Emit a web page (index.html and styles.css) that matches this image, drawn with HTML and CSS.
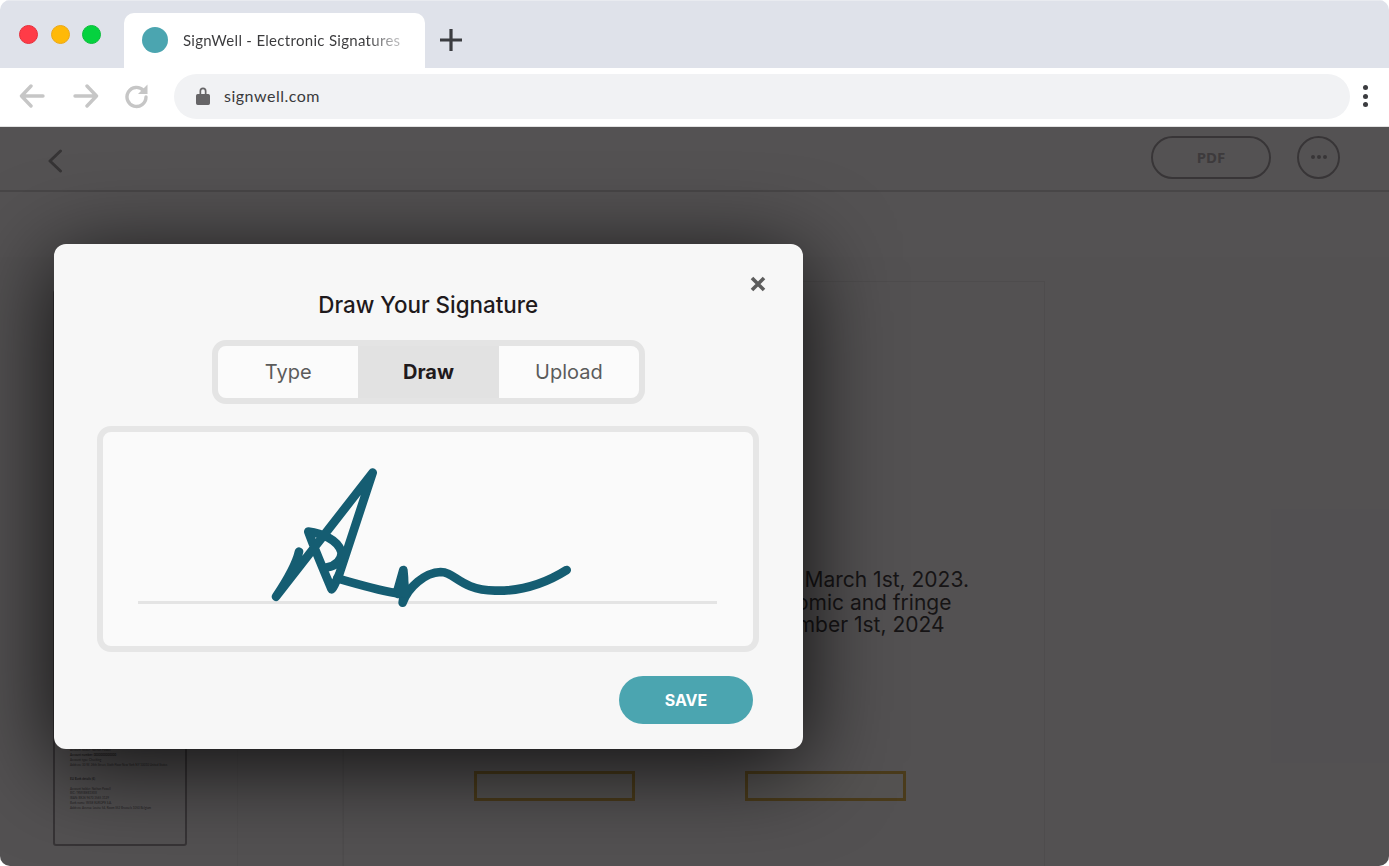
FILE: index.html
```html
<!DOCTYPE html>
<html>

<head>
    <title>SignWell</title>
    <link rel="stylesheet" href="styles.css">
</head>

<body>
    <div class="browser">
        <div class="tabstrip">
            <div class="dots">
                <span class="dot red"></span>
                <span class="dot yellow"></span>
                <span class="dot green"></span>
            </div>
            <div class="tab">
                <span class="favicon"></span>
                <span class="tab-title">SignWell - Electronic Signatures</span>
            </div>
            <svg class="new-tab" width="24" height="24" viewBox="0 0 24 24">
                <path d="M12 1v22M1 12h22" />
            </svg>
        </div>

        <div class="toolbar">
            <svg class="nav-icon" width="26" height="24" viewBox="0 0 26 24">
                <path d="M24 12H3M12 2 2.500 12 12 22" />
            </svg>
            <svg class="nav-icon" width="26" height="24" viewBox="0 0 26 24">
                <path d="M2 12h21M14 2l9.500 10L14 22" />
            </svg>
            <svg class="nav-icon reload" width="26" height="26" viewBox="0 0 26 26">
                <path d="M19.500 7.500A9.500 9.500 0 1 0 22 14" />
                <path class="solid" d="M23.500 1.500v9.500H14z" />
            </svg>
            <div class="address">
                <svg class="lock" width="14" height="19" viewBox="0 0 14 19">
                    <path d="M3.500 8V5a3.500 3.500 0 0 1 7 0v3h1.800q1.700 0 1.700 1.700v7.600q0 1.700-1.700 1.700H1.700Q0 19 0 17.300V9.700Q0 8 1.700 8zm1.700 0h3.600V5a1.800 1.800 0 0 0-3.600 0z" />
                </svg>
                <span>signwell.com</span>
            </div>
            <div class="menu">
                <span></span>
                <span></span>
                <span></span>
            </div>
        </div>

        <div class="app">
            <div class="app-header">
                <svg class="back" width="16" height="24" viewBox="0 0 16 24">
                    <path d="M13.500 2 3 12l10.500 10" />
                </svg>
                <div class="btn-pdf">PDF</div>
                <div class="btn-more">
                    <span></span>
                    <span></span>
                    <span></span>
                </div>
            </div>
            <div class="app-band"></div>
            <div class="app-body">
                <div class="thumbs">
                    <div class="thumb">
                        <p>Account holder: Nathan Powell</p>
                        <p><b>Account number: 0000000000000</b></p>
                        <p>Account type: Checking</p>
                        <p>Address: 30 W. 26th Street, Sixth Floor New York NY 10010 United States</p>
                        <p class="thumb-head"><b>EU Bank details (€)</b></p>
                        <p>Account holder: Nathan Powell</p>
                        <p>BIC: TRWIBEB1XXX</p>
                        <p>IBAN: BE26 9670 3565 3129</p>
                        <p>Bank name: WISE EUROPE S.A.</p>
                        <p>Address: Avenue Louise 54, Room S52 Brussels 1050 Belgium</p>
                    </div>
                </div>
                <div class="gutter"></div>
                <div class="sheet">
                    <p class="sheet-line">i. The term of this agreement starts on March 1st, 2023.</p>
                    <p class="sheet-line">The employee will also receive economic and fringe</p>
                    <p class="sheet-line">benefits through to the end of November 1st, 2024</p>
                    <div class="fields">
                        <div class="field"></div>
                        <div class="field"></div>
                    </div>
                </div>
            </div>
        </div>

        <div class="backdrop"></div>

        <div class="modal">
            <svg class="close" width="16" height="16" viewBox="0 0 16 16">
                <path d="M2 2l12 12M14 2 2 14" />
            </svg>
            <h2>Draw Your Signature</h2>
            <div class="tabs">
                <div class="tabs-item">Type</div>
                <div class="tabs-item active">Draw</div>
                <div class="tabs-item">Upload</div>
            </div>
            <div class="pad">
                <div class="baseline"></div>
                <svg class="signature" width="340" height="170" viewBox="0 0 1020 510">
                    <path d="M147 305C138 345 110 392 78 440L368 68L268 372C258 395 248 418 245 418C225 370 195 300 175 245C215 250 262 268 274 305C278 330 255 348 232 352" />
                    <path d="M262 385C320 402 385 420 440 430L460 360C464 395 464 425 458 458C475 410 525 368 572 366C615 366 630 420 735 422C815 424 890 398 950 360" />
                    <path d="M445 432L460 385L465 430" />
                </svg>
            </div>
            <div class="modal-foot">
                <div class="btn-save">SAVE</div>
            </div>
        </div>
    </div>
</body>

</html>
```

FILE: styles.css
```css
* {
    margin: 0;
    padding: 0;
    box-sizing: border-box;
}

body {
    background: #fff;
    font-family: 'Lato', sans-serif;
    overflow: hidden;
}

.browser {
    position: relative;
    display: flex;
    flex-direction: column;
    width: 1389px;
    height: 866px;
    overflow: hidden;
    border-radius: 10px;
}

/* tab strip */
.tabstrip {
    display: flex;
    align-items: flex-end;
    height: 68px;
    background: #dfe2ea;
    border-top: 1px solid #e9ebf0;
}

.dots {
    display: flex;
    gap: 12.500px;
    width: 124px;
    padding: 24px 0 24px 19px;
    align-self: flex-start;
}

.dot {
    width: 19px;
    height: 19px;
    border-radius: 50%;
}

.red {
    background: #ff3b47;
    border: 1px solid #e5303c;
}

.yellow {
    background: #ffb908;
    border: 1px solid #eba819;
}

.green {
    background: #05d23f;
    border: 1px solid #0cbd3c;
}

.tab {
    display: flex;
    align-items: center;
    width: 301px;
    height: 55px;
    padding: 0 18px 2px;
    background: #fff;
    border-radius: 10px 10px 0 0;
}

.favicon {
    width: 26px;
    height: 26px;
    margin-right: 15px;
    border-radius: 50%;
    background: #4ba5b0;
}

.tab-title {
    font-size: 15px;
    letter-spacing: .3px;
    white-space: nowrap;
    color: transparent;
    background: linear-gradient(90deg, #3a3a3c 85%, #b5b5b7 97%);
    -webkit-background-clip: text;
    background-clip: text;
}

.new-tab {
    margin: 0 0 16px 14px;
}

.new-tab path {
    fill: none;
    stroke: #3b3c40;
    stroke-width: 3.200;
}

/* toolbar */
.toolbar {
    display: flex;
    align-items: center;
    height: 59px;
    padding: 0 21px 2px 19px;
    background: #fff;
    border-bottom: 1px solid #e2e2e2;
}

.nav-icon {
    margin-right: 28px;
}

.nav-icon path {
    fill: none;
    stroke: #c6c6c6;
    stroke-width: 3.400;
    stroke-linecap: round;
    stroke-linejoin: round;
}

.nav-icon .solid {
    fill: #c6c6c6;
    stroke: none;
}

.reload {
    margin-right: 24px;
    margin-left: -3px;
}

.address {
    display: flex;
    align-items: center;
    flex: 1;
    height: 45px;
    padding: 0 0 2px 22px;
    background: #f1f2f4;
    border-radius: 23px;
    font-size: 16px;
    letter-spacing: .5px;
    color: #3a3a3c;
}

.lock {
    margin-right: 14px;
    fill: #666567;
    fill-rule: evenodd;
}

.menu {
    display: flex;
    flex-direction: column;
    gap: 3.500px;
    margin-left: 13px;
}

.menu span {
    width: 5px;
    height: 5px;
    border-radius: 50%;
    background: #3b3c40;
}

/* page behind the dialog */
.app {
    display: flex;
    flex-direction: column;
    flex: 1;
    min-height: 0;
}

.app-header {
    display: flex;
    align-items: center;
    flex: none;
    height: 65px;
    padding: 0 49px 3px 47px;
    border-bottom: 2px solid #d0d0d0;
}

.back {
    margin: 7px auto 0 0;
    fill: none;
    stroke: #8a8a8a;
    stroke-width: 3;
    stroke-linecap: round;
    stroke-linejoin: round;
}

.btn-pdf {
    width: 120px;
    height: 43px;
    margin-right: 26px;
    border: 2px solid #929092;
    border-radius: 22px;
    font: bold 15px/38px 'Noto Sans', sans-serif;
    text-align: center;
    color: #a5a3a5;
}

.btn-more {
    display: flex;
    align-items: center;
    justify-content: center;
    gap: 2px;
    width: 43px;
    height: 43px;
    border: 2px solid #929092;
    border-radius: 50%;
}

.btn-more span {
    width: 4px;
    height: 4px;
    border-radius: 50%;
    background: #929092;
}

.app-band {
    flex: none;
    height: 65px;
    background: #fff;
}

.app-body {
    display: flex;
    flex: 1;
    min-height: 0;
    background: #fafafa;
}

.thumbs {
    width: 238px;
    padding: 33px 0 0 53px;
    border-right: 1px solid #f0f0f0;
}

.thumb {
    width: 134px;
    height: 556px;
    padding-top: 456px;
    padding-left: 15px;
    background: #fbfbfb;
    border: 2px solid #8f8d8f;
    border-radius: 3px;
    font-size: 3px;
    line-height: 4.900px;
    color: #444;
    white-space: nowrap;
}

.thumb-head {
    margin: 9px 0 5px;
}

.gutter {
    width: 105px;
    border-right: 1px solid #f0f0f0;
}

.sheet {
    width: 702px;
    height: 640px;
    margin-top: 24px;
    padding-top: 287px;
    border: 1px solid #e6e6e6;
    font-family: 'Inter', sans-serif;
    text-align: center;
    font-size: 21px;
    line-height: 22.500px;
    color: #111;
    white-space: nowrap;
}

.fields {
    display: flex;
    justify-content: center;
    gap: 110px;
    margin: 134px 0 0 -8px;
}

.field {
    width: 161px;
    height: 30px;
    background: #fffdf6;
    border: 3px solid #d8a82a;
}

.backdrop {
    position: absolute;
    inset: 127px 0 0 0;
    background: rgba(24, 21, 23, .74);
}

/* dialog */
.modal {
    position: absolute;
    top: 244px;
    left: 54px;
    width: 748.500px;
    height: 505px;
    padding-top: 47px;
    background: #f7f7f7;
    border-radius: 12px;
    box-shadow: 0 15px 90px rgba(0, 0, 0, .85);
    font-family: 'Inter', sans-serif;
}

.close {
    position: absolute;
    top: 32px;
    right: 37px;
    fill: none;
    stroke: #5d5d5d;
    stroke-width: 3.600;
}

.modal h2 {
    font-size: 22.400px;
    line-height: 28px;
    font-weight: 500;
    text-align: center;
    color: #1f1a1c;
}

.tabs {
    display: flex;
    width: 433px;
    height: 64px;
    margin: 21px auto 22px 158px;
    overflow: hidden;
    background: #fbfbfb;
    border: 6px solid #e4e4e4;
    border-radius: 14px;
}

.tabs-item {
    flex: 1;
    font-size: 20px;
    line-height: 52px;
    text-align: center;
    color: #5b5b5b;
}

.tabs-item.active {
    background: #e2e2e2;
    font-weight: 700;
    color: #1f1a1c;
}

.pad {
    position: relative;
    width: 662px;
    height: 226px;
    margin: 0 auto 0 43px;
    background: #fafafa;
    border: 6px solid #e6e6e6;
    border-radius: 14px;
}

.baseline {
    height: 3px;
    margin: 169px 36px 0 35px;
    background: #e4e4e4;
}

.signature {
    position: absolute;
    top: 18px;
    left: 147px;
    fill: none;
    stroke: #155d72;
    stroke-width: 26;
    stroke-linecap: round;
    stroke-linejoin: round;
}

.modal-foot {
    display: flex;
    justify-content: flex-end;
    padding: 24px 49.500px 0 0;
}

.btn-save {
    width: 134px;
    height: 48px;
    background: #4ba5b0;
    border-radius: 24px;
    font-size: 16px;
    font-weight: 700;
    line-height: 48px;
    text-align: center;
    color: #fff;
}
```
